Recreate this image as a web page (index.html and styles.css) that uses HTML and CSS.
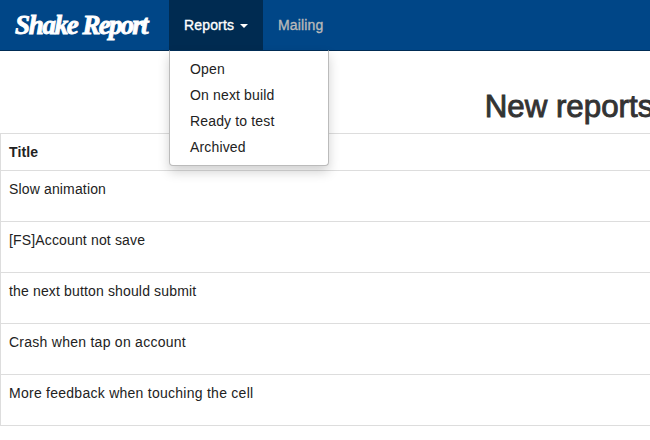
FILE: index.html
```html
<!DOCTYPE html>
<html lang="en">
<head>
<meta charset="utf-8">
<title>Shake Report</title>
<link rel="stylesheet" href="styles.css">
</head>
<body>
<header class="navbar">
  <a class="brand"><span class="word-shake">Shake</span><span class="word-report">Report</span></a>
  <nav class="nav">
    <div class="dropdown">
      <a class="nav-link active">Reports<span class="caret"></span></a>
      <ul class="menu">
        <li>Open</li>
        <li>On next build</li>
        <li>Ready to test</li>
        <li>Archived</li>
      </ul>
    </div>
    <a class="nav-link">Mailing</a>
  </nav>
</header>
<main class="page">
  <h1>New reports</h1>
  <table class="reports">
    <thead><tr><th>Title</th></tr></thead>
    <tbody>
      <tr><td>Slow animation</td></tr>
      <tr><td>[FS]Account not save</td></tr>
      <tr><td>the next button should submit</td></tr>
      <tr><td class="wide">Crash when tap on account</td></tr>
      <tr><td class="wide">More feedback when touching the cell</td></tr>
    </tbody>
  </table>
</main>
</body>
</html>
```
FILE: styles.css
```css
* { box-sizing: border-box; }
body {
  margin: 0;
  height: 440px;
  overflow: hidden;
  background: #fff;
  color: #222;
  font: 14px/20px "Liberation Sans", Arial, sans-serif;
  letter-spacing: 0.15px;
}
.navbar {
  display: flex;
  height: 51px;
  background: #004687;
  border-bottom: 1px solid #002c55;
}
.brand {
  display: flex;
  gap: 5px;
  width: 169px;
  padding-left: 15px;
  color: #fff;
  font: italic bold 27px/50px "Liberation Serif", "Times New Roman", serif;
  -webkit-text-stroke: 0.9px #fff;
}
.word-shake { letter-spacing: -1.3px; }
.word-report { letter-spacing: -1.8px; }
.nav { display: flex; }
.nav-link {
  display: flex;
  align-items: center;
  height: 50px;
  padding: 0 15px;
  color: #b9b9b9;
  -webkit-text-stroke: 0.35px;
}
.nav-link.active {
  width: 94px;
  background: #002b51;
  color: #fff;
}
.caret {
  margin-left: 6px;
  margin-top: 1px;
  border-top: 4px solid #fff;
  border-left: 4px solid transparent;
  border-right: 4px solid transparent;
}
.dropdown { position: relative; }
.menu {
  position: absolute;
  top: 50px;
  left: 0;
  width: 160px;
  height: 116px;
  margin: 0;
  padding: 6px 0 5px;
  list-style: none;
  background: #fff;
  border: 1px solid #bbb;
  border-top: 1px solid #002c55;
  border-radius: 0 0 4px 4px;
  box-shadow: 0 6px 12px rgba(0, 0, 0, 0.18);
}
.menu li { padding: 2px 20px 4px; }
.page {
  width: 100%;
  overflow: hidden;
}
h1 {
  margin: 0;
  padding-top: 36px;
  width: 1138px;
  height: 82px;
  color: #333;
  font-size: 31.3px;
  line-height: 40px;
  font-weight: normal;
  letter-spacing: 0;
  text-align: center;
  -webkit-text-stroke: 0.9px;
}
.reports {
  width: 1138px;
  border-collapse: collapse;
}
.reports th,
.reports td {
  padding: 8px;
  border: 1px solid #ddd;
  text-align: left;
  vertical-align: top;
}
.reports th { height: 37px; }
.reports td { height: 51px; }
.reports .wide { letter-spacing: 0.26px; }
```
